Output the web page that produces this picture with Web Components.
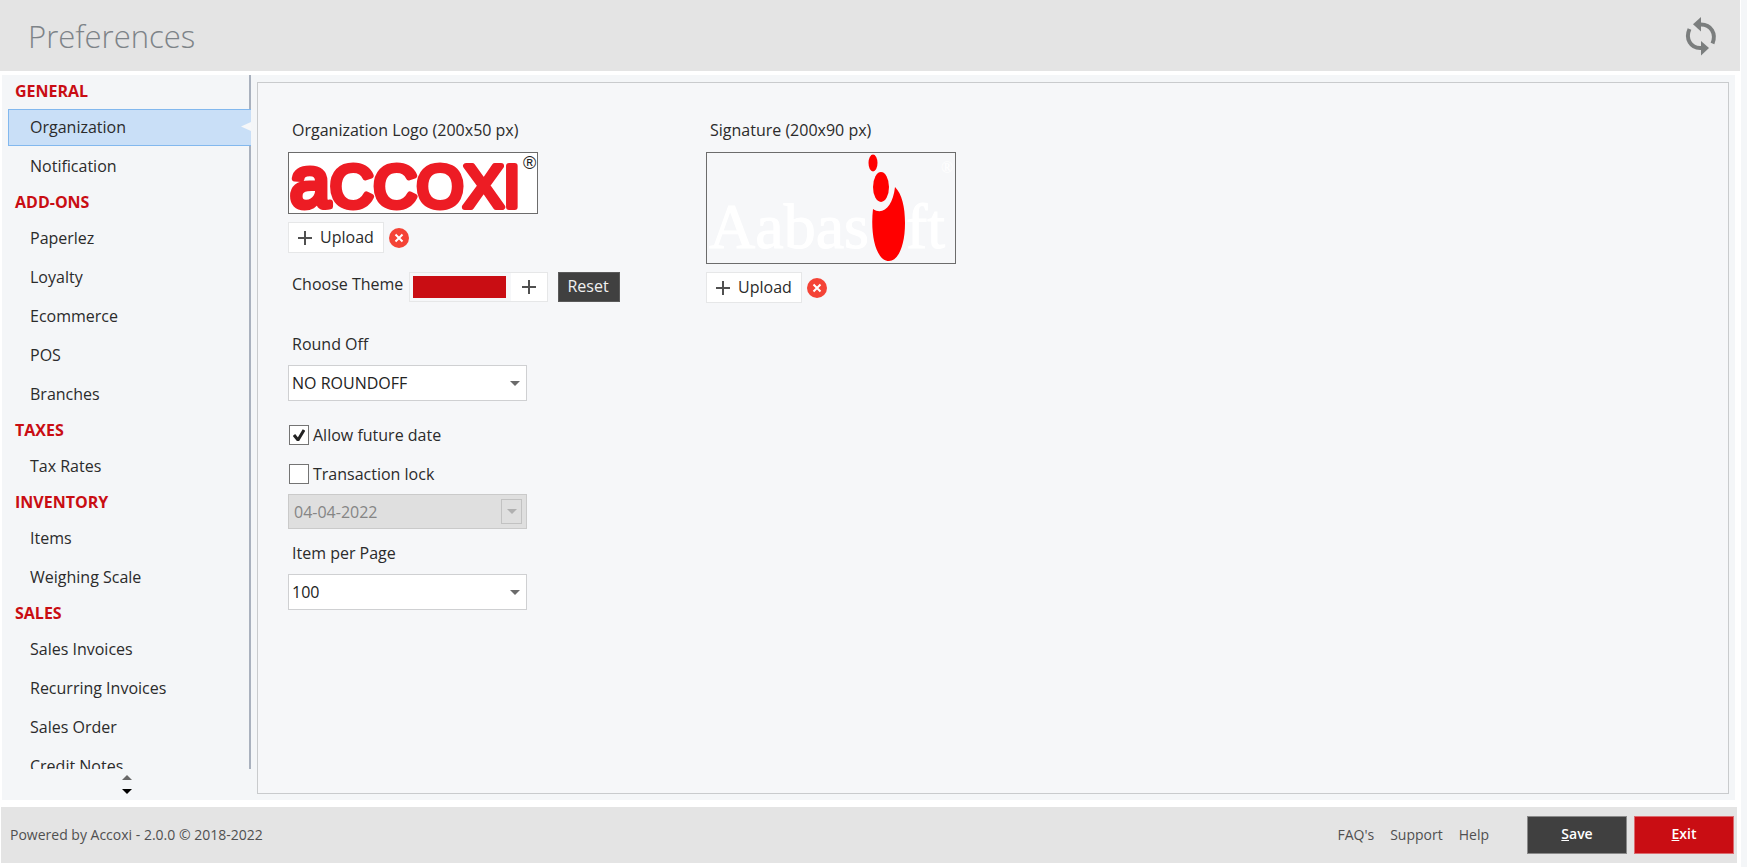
<!DOCTYPE html>
<html lang="en">
<head>
<meta charset="utf-8">
<title>Preferences</title>
<style>
    :root {
        --col-red: #c90d13;
        --col-dark: #404040;
        --col-bar: #e4e4e4;
        --col-side: #f4f6f8;
        --col-main: #f6f7f9;
        --col-text: #2b2b2b;
    }

    body {
        margin: 0;
        background: #fff;
        color: var(--col-text);
        font: 16px/24px "Open Sans", "Noto Sans", sans-serif;
    }
</style>
</head>
<body>
<preferences-app></preferences-app>

<script>
// Small base class: every element only has to return its markup
class BaseElement extends HTMLElement {
    constructor() {
        super();
        this.attachShadow({ mode: 'open' });
    }

    connectedCallback() {
        this.shadowRoot.innerHTML = `
            <style>
                *, :host { box-sizing: border-box; }
                button, input, select { font: inherit; color: inherit; margin: 0; border-radius: 0; }
                button { cursor: pointer; }
                svg { display: block; }
            </style>
            ${this.render()}
        `;
    }
}

class PageHeader extends BaseElement {
    render() {
        return `
            <style>
                :host {
                    display: flex;
                    justify-content: space-between;
                    align-items: center;
                    height: 71px;
                    padding: 0 20px 0 28px;
                    background: var(--col-bar);
                }

                h1 {
                    margin: 0;
                    font-size: 31px;
                    line-height: 40px;
                    font-weight: 300;
                    color: #7d8388;
                }

                button {
                    padding: 0;
                    border: none;
                    background: none;
                    color: #7b7e7e;
                }
            </style>
            <h1><slot></slot></h1>
            <button type="button" aria-label="Refresh">
                <svg width="38" height="40" viewBox="0 0 38 40" fill="none" stroke="currentColor" stroke-width="4">
                    <path d="M17 8.500H19C29 8.500 34.500 17.500 30.500 27.500"/>
                    <path d="M7.500 13C3 23 9 32 18 32H21"/>
                    <path d="M19 1V15.500L11 8.300Z" fill="currentColor" stroke="none"/>
                    <path d="M19 25V39.500L27 32Z" fill="currentColor" stroke="none"/>
                </svg>
            </button>
        `;
    }
}

class NavGroup extends BaseElement {
    render() {
        return `
            <style>
                :host { display: block; }

                h2 {
                    margin: 0;
                    padding-left: 13px;
                    font-size: 16px;
                    line-height: 33px;
                    font-weight: 700;
                    color: var(--col-red);
                }
            </style>
            <h2>${this.getAttribute('heading')}</h2>
            <slot></slot>
        `;
    }
}

class NavItem extends BaseElement {
    render() {
        return `
            <style>
                :host {
                    display: block;
                    height: 39px;
                    padding: 1px 0 1px 6px;
                }

                a {
                    display: flex;
                    justify-content: space-between;
                    align-items: center;
                    height: 37px;
                    padding: 0 0 2px 21px;
                    border: 1px solid transparent;
                    border-right: none;
                    color: inherit;
                    text-decoration: none;
                }

                svg { display: none; }

                :host([selected]) a {
                    border-color: #82b8ee;
                    background: #c9dff7;
                }

                :host([selected]) svg { display: block; }
            </style>
            <a href="#"><slot></slot>
                <svg width="10" height="9" viewBox="0 0 10 9"><path d="M10 0V9L0 4.500Z" fill="#f6f7f9"/></svg>
            </a>
        `;
    }
}

class PageSidebar extends BaseElement {
    render() {
        return `
            <style>
                :host {
                    display: flex;
                    flex-direction: column;
                    flex: 0 0 249px;
                    background: var(--col-side);
                }

                /* the divider is a shadow, so that the selected item covers it */
                nav {
                    flex: 1 1 0;
                    min-height: 0;
                    overflow: hidden;
                    box-shadow: inset -2px 0 #a9b1be;
                }

                .scroll {
                    display: flex;
                    flex-direction: column;
                    align-items: center;
                    gap: 9px;
                    height: 31px;
                    padding-top: 6px;
                }

                .scroll button {
                    padding: 0;
                    border: none;
                    background: none;
                }
            </style>
            <nav aria-label="Preferences"><slot></slot></nav>
            <div class="scroll">
                <button type="button" aria-label="Scroll up">
                    <svg width="10" height="5" viewBox="0 0 10 5"><path d="M0 5L5 0L10 5Z" fill="#686868"/></svg>
                </button>
                <button type="button" aria-label="Scroll down">
                    <svg width="10" height="5" viewBox="0 0 10 5"><path d="M0 0L5 5L10 0Z" fill="#000"/></svg>
                </button>
            </div>
        `;
    }
}

const plusIcon = `
    <svg width="14" height="14" viewBox="0 0 14 14" stroke="#505050" stroke-width="2"><path d="M7 0V14M0 7H14"/></svg>
`;

const arrowIcon = `
    <svg class="arrow" width="10" height="5" viewBox="0 0 10 5"><path d="M0 0L5 5L10 0Z" fill="currentColor"/></svg>
`;

class ImageUpload extends BaseElement {
    render() {
        return `
            <style>
                :host { display: block; }

                .caption { padding-left: 4px; }

                .preview {
                    width: 250px;
                    margin: 10px 0 8px;
                    border: 1px solid #6c6c6c;
                }

                .actions {
                    display: flex;
                    align-items: center;
                    gap: 5px;
                }

                button {
                    padding: 0;
                    border: none;
                    background: none;
                }

                .upload {
                    display: flex;
                    justify-content: center;
                    align-items: center;
                    gap: 8px;
                    width: 96px;
                    height: 31px;
                    border: 1px solid #e6e7e8;
                    background: #fff;
                }

                .upload span { padding-bottom: 2px; }
            </style>
            <div class="caption">${this.getAttribute('caption')}</div>
            <div class="preview"><slot></slot></div>
            <div class="actions">
                <button type="button" class="upload">${plusIcon}<span>Upload</span></button>
                <button type="button" aria-label="Remove ${this.getAttribute('caption')}">
                    <svg width="20" height="20" viewBox="0 0 20 20">
                        <circle cx="10" cy="10" r="10" fill="#f44336"/>
                        <path d="M6.500 6.500L13.500 13.500M13.500 6.500L6.500 13.500" stroke="#fff" stroke-width="2"/>
                    </svg>
                </button>
            </div>
        `;
    }
}

class AccoxiLogo extends BaseElement {
    render() {
        return `
            <style>
                :host { display: block; background: #fff; }

                svg {
                    overflow: visible;
                    font-family: "Liberation Sans", sans-serif;
                }

                .word {
                    fill: #ed1c24;
                    stroke: #ed1c24;
                    stroke-width: 6;
                    stroke-linejoin: round;
                }
            </style>
            <svg width="248" height="60" viewBox="0 0 248 60" role="img" aria-label="accoxi">
                <text class="word" x="1" y="54"><tspan font-size="72">a</tspan><tspan font-size="60">CCOXI</tspan></text>
                <text x="234" y="16" font-size="18" fill="#222">®</text>
            </svg>
        `;
    }
}

class AabasoftLogo extends BaseElement {
    render() {
        return `
            <style>
                :host { display: block; font-family: "Liberation Serif", serif; }
            </style>
            <svg width="248" height="110" viewBox="0 0 248 110" role="img" aria-label="Aabasoft">
                <g fill="#fff" stroke="#fff" font-size="64">
                    <text x="2" y="95">Aabas</text>
                    <text x="199" y="95">ft</text>
                    <text x="234" y="20" font-size="16" stroke="none">®</text>
                </g>
                <ellipse cx="166" cy="10" rx="4.500" ry="8.500" fill="#f00"/>
                <ellipse cx="174" cy="34" rx="8" ry="15" fill="#f00"/>
                <path d="M166 56C176 63 186 53 188 34C195 41 198 54 198 70C198 93 191 108 182 108C169 108 163 82 166 56Z" fill="#f00"/>
            </svg>
        `;
    }
}

class ThemePicker extends BaseElement {
    render() {
        return `
            <style>
                :host {
                    display: flex;
                    align-items: center;
                    padding-left: 4px;
                }

                label { flex: 0 0 117px; padding-bottom: 6px; }

                .picker {
                    display: flex;
                    border: 1px solid #e6e7e8;
                }

                input {
                    width: 101px;
                    height: 28px;
                    padding: 3px 5px 3px 3px;
                    border: none;
                    background: none;
                    appearance: none;
                }

                input::-webkit-color-swatch-wrapper { padding: 0; }
                input::-webkit-color-swatch { border: none; border-radius: 0; }

                .more {
                    display: flex;
                    justify-content: center;
                    align-items: center;
                    width: 36px;
                    height: 28px;
                    padding: 0;
                    border: none;
                    background: #fff;
                }

                .reset {
                    width: 62px;
                    height: 30px;
                    margin-left: 10px;
                    padding: 0 2px 2px 0;
                    border: 1px solid #5a5a5a;
                    background: var(--col-dark);
                    color: #f0f0f0;
                }
            </style>
            <label for="theme">Choose Theme</label>
            <div class="picker">
                <input id="theme" type="color" value="#c90d13">
                <button type="button" class="more" aria-label="More colors">${plusIcon}</button>
            </div>
            <button type="button" class="reset">Reset</button>
        `;
    }
}

class SelectField extends BaseElement {
    render() {
        return `
            <style>
                :host { display: block; width: 239px; }

                label {
                    display: block;
                    margin-bottom: 9px;
                    padding-left: 4px;
                }

                .box { display: grid; align-items: center; }
                .box > * { grid-area: 1 / 1; }

                select {
                    width: 100%;
                    height: 36px;
                    padding: 0 24px 0 3px;
                    border: 1px solid #cfd0d2;
                    background: #fff;
                    color: #222;
                    appearance: none;
                }

                .arrow {
                    justify-self: end;
                    margin-right: 7px;
                    color: #6b6b6b;
                    pointer-events: none;
                }
            </style>
            <label for="field">${this.getAttribute('label')}</label>
            <div class="box">
                <select id="field"><option>${this.getAttribute('value')}</option></select>
                ${arrowIcon}
            </div>
        `;
    }
}

class CheckField extends BaseElement {
    render() {
        return `
            <style>
                :host { display: block; }

                label {
                    display: flex;
                    align-items: center;
                    gap: 4px;
                    padding-left: 1px;
                }

                .box { display: grid; place-items: center; }
                .box > * { grid-area: 1 / 1; }

                input {
                    width: 20px;
                    height: 20px;
                    border: 1px solid #747474;
                    background: #fff;
                    appearance: none;
                }

                svg { visibility: hidden; pointer-events: none; }
                input:checked + svg { visibility: visible; }
            </style>
            <label>
                <span class="box">
                    <input type="checkbox" ${this.hasAttribute('checked') ? 'checked' : ''}>
                    <svg width="12" height="12" viewBox="0 0 12 12"><path d="M1 6L5 11L11 1" fill="none" stroke="#222" stroke-width="3"/></svg>
                </span>
                <slot></slot>
            </label>
        `;
    }
}

class DateField extends BaseElement {
    render() {
        return `
            <style>
                :host {
                    display: flex;
                    align-items: center;
                    width: 239px;
                    height: 35px;
                    padding: 0 4px 0 5px;
                    border: 1px solid #cacaca;
                    background: #dfdfdf;
                    color: #858585;
                }

                input {
                    flex: 1;
                    min-width: 0;
                    padding: 0;
                    border: none;
                    background: none;
                }

                button {
                    display: flex;
                    justify-content: center;
                    align-items: center;
                    width: 21px;
                    height: 25px;
                    padding: 0;
                    border: 1px solid #c2c2c2;
                    background: none;
                    color: #b0b0b0;
                }
            </style>
            <input type="text" aria-label="Transaction lock date" value="${this.getAttribute('value')}" disabled>
            <button type="button" aria-label="Open calendar" disabled>${arrowIcon}</button>
        `;
    }
}

class OrganizationPanel extends BaseElement {
    render() {
        return `
            <style>
                :host {
                    display: grid;
                    grid-template-columns: 332px 250px;
                    gap: 86px;
                    align-items: start;
                    flex: 1;
                    min-width: 0;
                    margin: 7px 6px 6px;
                    padding: 35px 30px;
                    border: 1px solid #c9cbcd;
                    background: var(--col-main);
                }

                theme-picker { margin: 19px 0 30px; }
                .allow { margin-top: 22px; }
                .lock { margin: 15px 0 8px; }
                .paging { margin-top: 12px; }
            </style>
            <div>
                <image-upload caption="Organization Logo (200x50 px)"><accoxi-logo></accoxi-logo></image-upload>
                <theme-picker></theme-picker>
                <select-field label="Round Off" value="NO ROUNDOFF"></select-field>
                <check-field class="allow" checked>Allow future date</check-field>
                <check-field class="lock">Transaction lock</check-field>
                <date-field value="04-04-2022"></date-field>
                <select-field class="paging" label="Item per Page" value="100"></select-field>
            </div>
            <image-upload caption="Signature (200x90 px)"><aabasoft-logo></aabasoft-logo></image-upload>
        `;
    }
}

class PageFooter extends BaseElement {
    render() {
        return `
            <style>
                :host {
                    display: flex;
                    align-items: center;
                    height: 56px;
                    padding: 0 3px 0 9px;
                    background: var(--col-bar);
                    font-size: 14px;
                    color: #505050;
                }

                .powered { flex: 1; }

                .links {
                    display: flex;
                    gap: 16px;
                    margin-right: 38px;
                }

                a { color: inherit; text-decoration: none; }

                .buttons { display: flex; gap: 7px; }

                button {
                    width: 100px;
                    height: 38px;
                    padding: 0 0 2px;
                    border: 1px solid #8a8a8a;
                    background: var(--col-dark);
                    color: #fff;
                    font-weight: 600;
                }

                .exit {
                    border-color: #dc6a6e;
                    background: var(--col-red);
                }
            </style>
            <div class="powered">Powered by Accoxi - 2.0.0 © 2018-2022</div>
            <div class="links">
                <a href="#">FAQ's</a>
                <a href="#">Support</a>
                <a href="#">Help</a>
            </div>
            <div class="buttons">
                <button type="button"><u>S</u>ave</button>
                <button type="button" class="exit"><u>E</u>xit</button>
            </div>
        `;
    }
}

class PreferencesApp extends BaseElement {
    get groups() {
        return {
            'GENERAL': ['Organization', 'Notification'],
            'ADD-ONS': ['Paperlez', 'Loyalty', 'Ecommerce', 'POS', 'Branches'],
            'TAXES': ['Tax Rates'],
            'INVENTORY': ['Items', 'Weighing Scale'],
            'SALES': ['Sales Invoices', 'Recurring Invoices', 'Sales Order', 'Credit Notes']
        };
    }

    render() {
        const nav = Object.entries(this.groups).map(([heading, items]) => `
            <nav-group heading="${heading}">
                ${items.map(item => `<nav-item ${item === 'Organization' ? 'selected' : ''}>${item}</nav-item>`).join('')}
            </nav-group>
        `).join('');

        return `
            <style>
                :host {
                    display: flex;
                    flex-direction: column;
                    height: 100vh;
                    padding-bottom: 4px;
                    border-right: 6px solid var(--col-side);
                }

                page-header { margin-right: 1px; }

                main {
                    display: flex;
                    flex: 1;
                    min-height: 0;
                    margin: 4px 6px 7px 2px;
                    background: var(--col-side);
                }

                page-footer { margin: 0 4px 0 1px; }
            </style>
            <page-header>Preferences</page-header>
            <main>
                <page-sidebar>${nav}</page-sidebar>
                <organization-panel></organization-panel>
            </main>
            <page-footer></page-footer>
        `;
    }
}

customElements.define('page-header', PageHeader);
customElements.define('nav-group', NavGroup);
customElements.define('nav-item', NavItem);
customElements.define('page-sidebar', PageSidebar);
customElements.define('image-upload', ImageUpload);
customElements.define('accoxi-logo', AccoxiLogo);
customElements.define('aabasoft-logo', AabasoftLogo);
customElements.define('theme-picker', ThemePicker);
customElements.define('select-field', SelectField);
customElements.define('check-field', CheckField);
customElements.define('date-field', DateField);
customElements.define('organization-panel', OrganizationPanel);
customElements.define('page-footer', PageFooter);
customElements.define('preferences-app', PreferencesApp);
</script>
</body>
</html>
